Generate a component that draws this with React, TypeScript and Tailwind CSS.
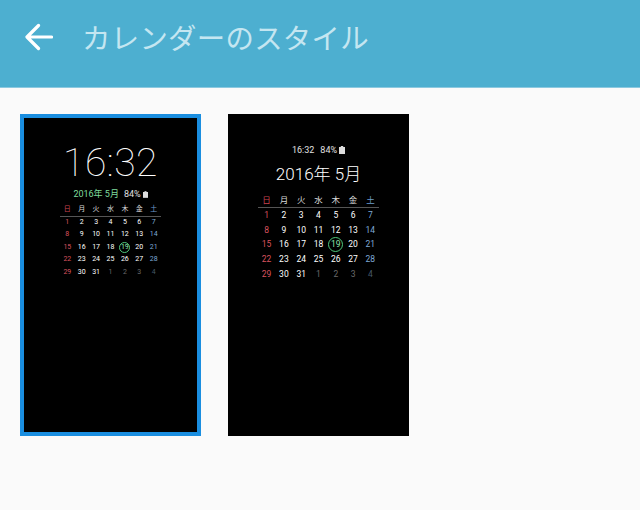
const font = { jp: "font-['Roboto','Noto_Sans_CJK_JP',sans-serif]" };

const days = ["日", "月", "火", "水", "木", "金", "土"];
const dates = [
  1, 2, 3, 4, 5, 6, 7, 8, 9, 10, 11, 12, 13, 14, 15, 16, 17, 18, 19, 20, 21, 22, 23, 24, 25, 26, 27, 28, 29, 30, 31, 1,
  2, 3, 4,
];

function dayColor(col: number, idx: number) {
  const dim = idx >= 31;
  if (col === 0) return "text-[#d9535f]";
  if (col === 6) return dim ? "text-[#46586a]" : "text-[#7fa9d6]";
  return dim ? "text-[#6a6a6a]" : "text-white";
}

function Calendar({ small }: { small: boolean }) {
  const cols = small ? "grid-cols-[repeat(7,14.4px)]" : "grid-cols-[repeat(7,17.3px)]";
  const rowH = small ? "h-[12.5px]" : "h-[14.9px]";
  const size = small ? "text-[7px]" : "text-[8.5px]";
  const ring = small ? "w-[11px] h-[11px]" : "w-[15px] h-[15px]";
  return (
    <div className={`${size} leading-none`}>
      <div className={`grid ${cols} border-b border-[#555] ${small ? "pb-[3px] -mb-[1px]" : "pb-[2px]"}`}>
        {days.map((d, i) => (
          <div key={d} className={`text-center ${i === 0 ? "text-[#c8434f]" : i === 6 ? "text-[#6d9ccc]" : "text-[#d8d8d8]"}`}>
            {d}
          </div>
        ))}
      </div>
      <div className={`grid ${cols}`}>
        {dates.map((n, i) => (
          <div key={i} className={`${rowH} flex items-center justify-center ${dayColor(i % 7, i)}`}>
            {n === 19 && i === 18 ? (
              <span className={`${ring} shrink-0 rounded-full border border-[#4fc97c] flex items-center justify-center text-[#8fe6ac]`}>{n}</span>
            ) : (
              n
            )}
          </div>
        ))}
      </div>
    </div>
  );
}

function Battery({ small }: { small: boolean }) {
  return (
    <svg width={small ? 5 : 6} height={small ? 7 : 8} viewBox="0 0 6 8" className="inline-block ml-[2px]">
      <rect x="1.8" y="0" width="2.4" height="1" fill="#ddd" />
      <rect x="0" y="1" width="6" height="7" fill="#ddd" />
    </svg>
  );
}

export default function App() {
  return (
    <div className={`w-[640px] h-[510px] bg-[#fafafa] overflow-hidden ${font.jp}`}>
      <header className="h-[88px] bg-[#4dafd0] border-b border-[#8cc9e0] flex items-center pl-[25px] pb-[7px]">
        <svg width="28" height="28" viewBox="0 0 28 28" fill="none" stroke="#fff" strokeWidth="3.2" strokeLinecap="round" strokeLinejoin="round" className="mb-[6px]">
          <path d="M26.5 14H2.5M13.5 2.5 2 14l11.5 11.5" />
        </svg>
        <h1 className="ml-[29px] text-[28.4px] leading-none font-normal text-[#c4e6f1] tracking-[0.3px]">カレンダーのスタイル</h1>
      </header>

      <main className="flex gap-[27px] pl-[20px] pt-[26px]">
        <div className="w-[181px] h-[322px] bg-black border-[4px] border-[#1a8ee0] flex flex-col items-center pt-[22px]">
          <div className="text-[39px] leading-[46px] font-thin text-white tracking-[0.5px]">16:32</div>
          <div className="mt-[3px] text-[9px] leading-[10px] flex items-center mb-[7px]">
            <span className="text-[#7fdc9c]">2016年 5月</span>
            <span className="ml-[5px] text-[#e0e0e0]">84%</span>
            <Battery small />
          </div>
          <Calendar small />
        </div>

        <div className="w-[181px] h-[322px] bg-black flex flex-col items-center pt-[31px]">
          <div className="text-[9px] leading-[10px] flex items-center text-[#e0e0e0]">
            <span>16:32</span>
            <span className="ml-[6px]">84%</span>
            <Battery small={false} />
          </div>
          <div className="mt-[9px] text-[17px] leading-[20px] font-light text-white mb-[12px]">2016年 5月</div>
          <Calendar small={false} />
        </div>
      </main>
    </div>
  );
}
